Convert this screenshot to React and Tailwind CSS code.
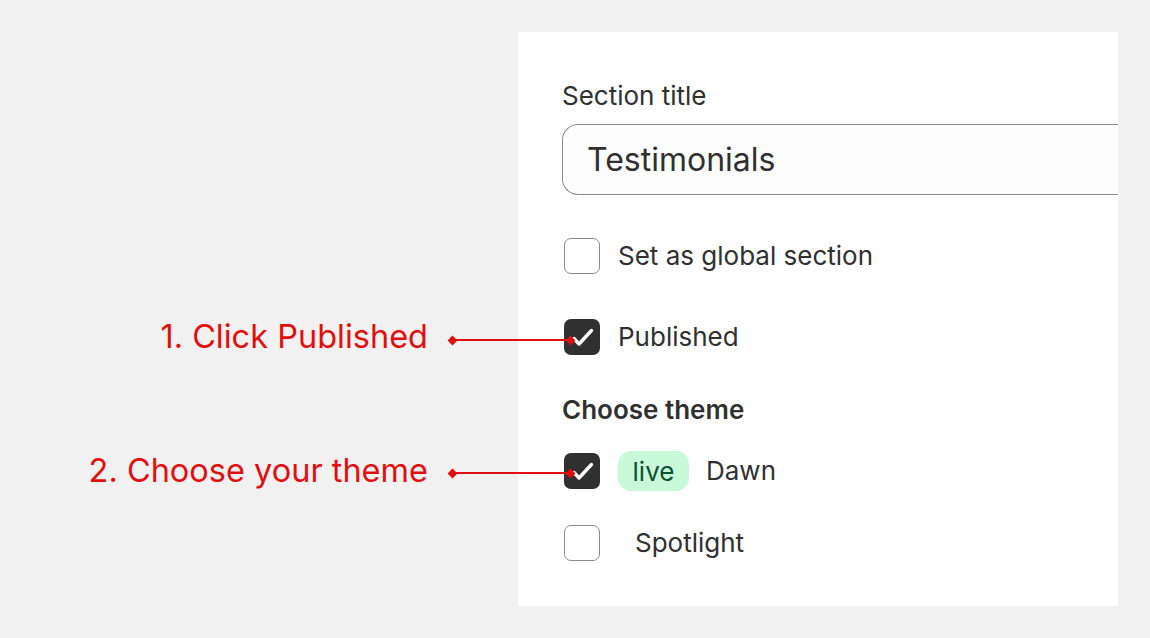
import React from 'react';

const font = { fontFamily: 'Inter, "Noto Sans", sans-serif' };

const Check = () => (
  <svg viewBox="0 0 36 36" className="w-9 h-9">
    <path d="M10 19.5 L15 25 L27.5 11.5" fill="none" stroke="#fff" strokeWidth="3.4" strokeLinecap="round" strokeLinejoin="round" />
  </svg>
);

const Checkbox = ({ checked }) =>
  checked ? (
    <div className="w-9 h-9 rounded-[7px] bg-[#303030] flex items-center justify-center shrink-0">
      <Check />
    </div>
  ) : (
    <div className="w-9 h-9 rounded-[7px] bg-white border-[1.5px] border-[#8a8a8a] shrink-0" />
  );

// red callout that points at the checkbox of its row
const Callout = ({ children, shift }) => (
  <div className="absolute left-[-490px] w-[500px] top-0 bottom-0 flex items-center justify-end z-10 pointer-events-none">
    <span className="text-[32.5px] leading-10 text-[#e00f0f] mr-[21px] whitespace-nowrap">{children}</span>
    <div className={`flex items-center ${shift}`}>
      <div className="w-[7px] h-[7px] bg-[#e00f0f] rotate-45" />
      <div className="w-[111px] h-[2px] bg-[#e00f0f]" />
      <div className="w-[7px] h-[7px] bg-[#e00f0f] rotate-45" />
    </div>
  </div>
);

export default function App() {
  return (
    <div className="w-[1150px] h-[638px] bg-[#f1f1f1] pt-[32px] overflow-hidden text-[#303030]" style={font}>
      <div className="ml-[518px] w-[600px] h-[574px] bg-white pl-[44px] pt-[48px] relative">
        <div className="text-[26px] leading-8">Section title</div>
        <div className="mt-3 w-[556px] h-[71px] border border-[#8a8a8a] border-r-0 rounded-l-[16px] bg-[#fdfdfd] flex items-center pl-6">
          <span className="text-[32px] leading-9">Testimonials</span>
        </div>

        <div className="mt-[43px] flex items-center h-9 ml-[2px]">
          <Checkbox checked={false} />
          <span className="ml-[18px] text-[26px] leading-8">Set as global section</span>
        </div>

        <div className="mt-[45px] flex items-center h-9 ml-[2px] relative">
          <Callout shift="translate-y-[3px]">1. Click Published</Callout>
          <Checkbox checked />
          <span className="ml-[18px] text-[26px] leading-8">Published</span>
        </div>

        <div className="mt-[39px] text-[26px] leading-8 font-semibold">Choose theme</div>

        <div className="mt-[25px] flex items-center h-10 ml-[2px] relative">
          <Callout shift="translate-y-[2px]">2. Choose your theme</Callout>
          <Checkbox checked />
          <span className="ml-[18px] h-10 w-[71px] rounded-[13px] bg-[#c8f9d9] text-[#0c5132] text-[26px] flex items-center justify-center">live</span>
          <span className="ml-[17px] text-[26px] leading-8">Dawn</span>
        </div>

        <div className="mt-[34px] flex items-center h-9 ml-[2px]">
          <Checkbox checked={false} />
          <span className="ml-[35px] text-[26px] leading-8">Spotlight</span>
        </div>
      </div>
    </div>
  );
}
